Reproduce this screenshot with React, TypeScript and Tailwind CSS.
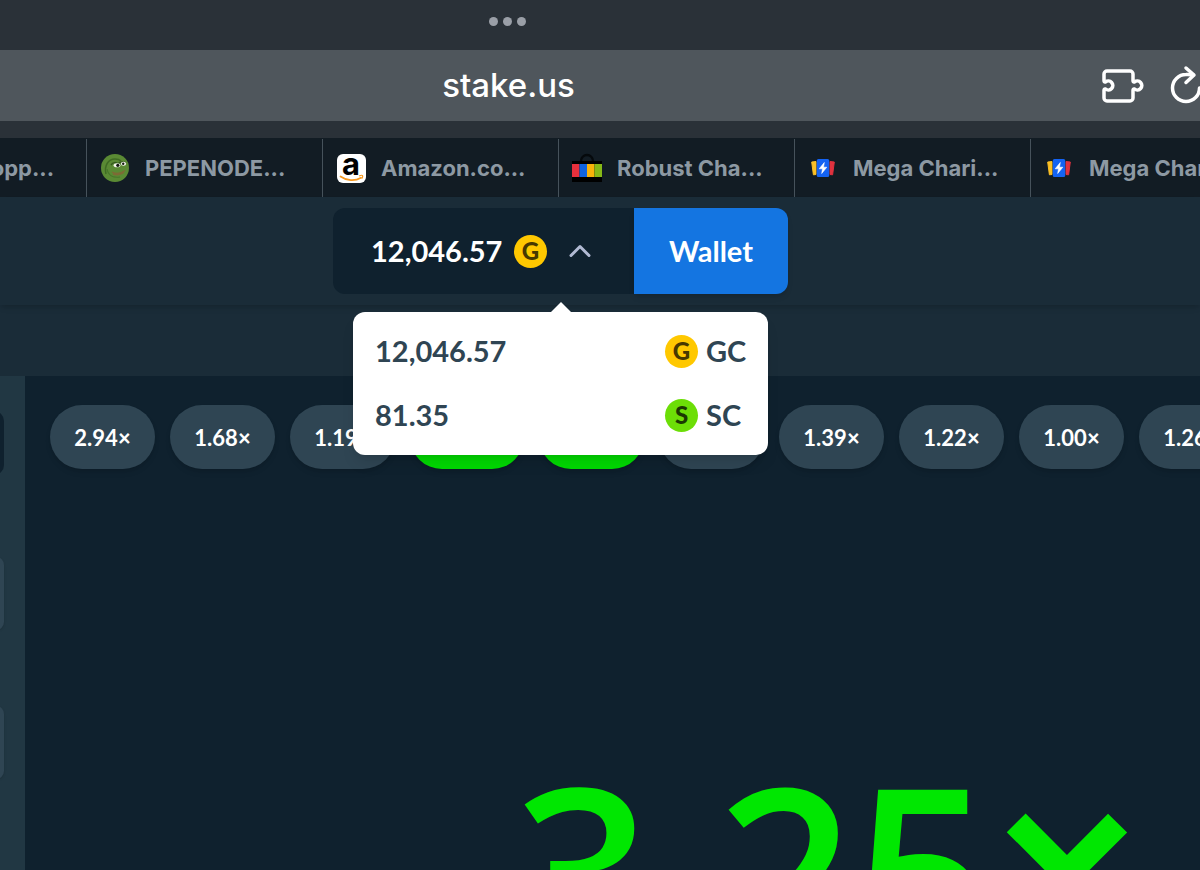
import React from 'react';
import { ChevronUp } from 'lucide-react';
import clsx from 'clsx';

const uiFont = "font-['Inter','Liberation_Sans',sans-serif]";
const siteFont = "font-['Lato','Liberation_Sans',sans-serif]";

type BookmarkIcon = 'pepe' | 'amazon' | 'bag' | 'cards';

const bookmarks: { id: number; label: string; icon: BookmarkIcon }[] = [
  { id: 1, label: 'PEPENODE...', icon: 'pepe' },
  { id: 2, label: 'Amazon.co...', icon: 'amazon' },
  { id: 3, label: 'Robust Cha...', icon: 'bag' },
  { id: 4, label: 'Mega Chari...', icon: 'cards' },
  { id: 5, label: 'Mega Chari...', icon: 'cards' },
];

const results: { id: number; value?: string; win?: boolean; wide?: boolean }[] = [
  { id: 1, value: '2.94' },
  { id: 2, value: '1.68' },
  { id: 3, value: '1.19' },
  { id: 4, win: true, wide: true },
  { id: 5, win: true },
  { id: 6 },
  { id: 7, value: '1.39' },
  { id: 8, value: '1.22' },
  { id: 9, value: '1.00' },
  { id: 10, value: '1.26' },
];

const balances: { amount: string; coin: 'G' | 'S'; code: string }[] = [
  { amount: '12,046.57', coin: 'G', code: 'GC' },
  { amount: '81.35', coin: 'S', code: 'SC' },
];

function PepeIcon() {
  return (
    <svg viewBox="0 0 28 28" className="w-7 h-7" aria-hidden="true">
      <circle cx="14" cy="14" r="14" fill="#5a8a34" />
      <path d="M5 20C3 12 7 5 14 5c3 0 5 1 6 2" fill="none" stroke="#3f6b24" strokeWidth="1.5" />
      <path d="M10 11c2-3 5-3 7-1 2-2.500 5-2.500 8-1" fill="none" stroke="#35591f" strokeWidth="1.5" />
      <ellipse cx="16" cy="11.300" rx="3.400" ry="2" fill="#f4f6ee" />
      <ellipse cx="22.500" cy="9.800" rx="2.600" ry="2" fill="#f4f6ee" />
      <circle cx="16.800" cy="11.300" r="1.600" fill="#141a10" />
      <circle cx="22.200" cy="9.800" r="1.200" fill="#141a10" />
      <path d="M11 18c4 2.500 9 1.500 13-1.500M12 20c4 1.500 8 .5 11-1.500" fill="none" stroke="#7d6a35" strokeWidth="1.4" />
      <path d="M6 15c1 6 6 9 13 8" fill="none" stroke="#47762a" strokeWidth="1.2" />
    </svg>
  );
}

function AmazonIcon() {
  return (
    <span className="relative block w-[29px] h-[29px] rounded-md bg-white overflow-hidden" aria-hidden="true">
      <span className="block text-center text-[31px] leading-5 font-bold text-black">a</span>
      <svg viewBox="0 0 29 29" className="absolute inset-0">
        <path d="M3.500 22.500c6 4.300 14.500 4.800 20.500 1.200" fill="none" stroke="#f7981d" strokeWidth="1.7" strokeLinecap="round" />
        <path d="M22 22c2-.8 3.300-.8 3.600-.3s0 1.800-.9 3" fill="none" stroke="#f7981d" strokeWidth="1.2" />
      </svg>
    </span>
  );
}

function BagIcon() {
  return (
    <svg viewBox="0 0 30 30" className="w-[30px] h-[30px]" aria-hidden="true">
      <path d="M9 9V8a6 6 0 0 1 12 0v1" fill="none" stroke="#05090c" strokeWidth="2.4" />
      <path d="M0 8h30v21H0z" fill="#000" />
      <path d="M0 11h7.500v13H0z" fill="#e8303c" />
      <path d="M7.500 11H15v13H7.500z" fill="#0f63e0" />
      <path d="M15 11h7.500v13H15z" fill="#f7b20a" />
      <path d="M22.500 11H30v13h-7.500z" fill="#86b817" />
    </svg>
  );
}

function CardsIcon() {
  return (
    <svg viewBox="0 0 24 18" className="w-6 h-[18px]" aria-hidden="true">
      <path d="M.7 3 5 2.500V15.500l-2.600.3z" fill="#fbbf24" stroke="#fbbf24" strokeLinejoin="round" />
      <path d="M23.300 3 19 2.500V15.500l2.600.3z" fill="#e0323f" stroke="#e0323f" strokeLinejoin="round" />
      <rect x="5.800" width="12.400" height="18" rx="1.500" fill="#1463f3" />
      <path d="M13.300 3.500 8.200 9.800h3.300L10.700 14.500l5.100-6.300h-3.300z" fill="#fff" stroke="#fff" strokeWidth=".6" />
    </svg>
  );
}

function SiteIcon({ icon }: { icon: BookmarkIcon }) {
  switch (icon) {
    case 'pepe':
      return <PepeIcon />;
    case 'amazon':
      return <AmazonIcon />;
    case 'bag':
      return <BagIcon />;
    default:
      return <CardsIcon />;
  }
}

function Coin({ kind }: { kind: 'G' | 'S' }) {
  return (
    <span
      className={clsx(
        'flex items-center justify-center shrink-0 w-[33px] h-[33px] rounded-full text-2xl leading-none font-black',
        kind === 'G' ? 'bg-[#ffc800] text-[#473800]' : 'bg-[#6cde07] text-[#1b3802]'
      )}
    >
      {kind}
    </span>
  );
}

function BrowserChrome() {
  return (
    <div className={clsx(uiFont, 'shrink-0 bg-[#2a3138]')}>
      {/* Multitasking dots */}
      <button aria-label="Window controls" className="flex items-center justify-center gap-[5px] w-full h-[50px] pr-[186px] pb-2">
        <span className="w-[9px] h-[9px] rounded-full bg-[#9a9fa7]" />
        <span className="w-[9px] h-[9px] rounded-full bg-[#9a9fa7]" />
        <span className="w-[9px] h-[9px] rounded-full bg-[#9a9fa7]" />
      </button>

      {/* Address bar */}
      <div className="flex items-center h-[71px] bg-[#4f565c] overflow-hidden">
        <input
          type="text"
          aria-label="Address"
          defaultValue="stake.us"
          className="flex-1 min-w-0 pr-[84px] bg-transparent text-center text-[33px] font-medium text-white outline-none"
        />
        <button aria-label="Extensions" className="shrink-0 mr-6">
          <svg viewBox="0 0 44 36" className="w-11 h-9" fill="none" stroke="#fff" strokeWidth="3.500" strokeLinecap="round" strokeLinejoin="round">
            <path d="M3 12.500V6a3 3 0 0 1 3-3h23a3 3 0 0 1 3 3v6.500q0 2 1.500 1.500a4.500 4.500 0 1 1 0 7q-1.500-.5-1.500 1.500V30a3 3 0 0 1-3 3H6a3 3 0 0 1-3-3v-7.500q0-2 1.500-1.500a4.500 4.500 0 1 0 0-7q-1.500.5-1.500-1.500z" />
          </svg>
        </button>
        <button aria-label="Reload" className="shrink-0 -mr-1">
          <svg viewBox="0 0 35 42" className="w-[35px] h-[42px]" fill="none" stroke="#fff" strokeWidth="3.500" strokeLinecap="round" strokeLinejoin="round">
            <path d="M24 10q-3.500-.8-7-.5a13.500 13.500 0 1 0 13.500 13.500" />
            <path d="m17 3 8 7-8 7.500" />
          </svg>
        </button>
      </div>

      {/* Bookmarks */}
      <nav aria-label="Bookmarks" className="flex mt-[17px] h-[59px] pt-px bg-[#121c24] text-[22px] font-bold text-[#8d99a3] overflow-hidden">
        <a href="#" className="flex items-center justify-end shrink-0 w-[86px] pr-8 whitespace-nowrap">
          Shopp...
        </a>
        {bookmarks.map((item) => (
          <a
            key={item.id}
            href="#"
            className="flex items-center gap-[14px] shrink-0 w-[236px] pl-3 border-l border-[#46525b] whitespace-nowrap"
          >
            <span className="flex items-center justify-center w-8">
              <SiteIcon icon={item.icon} />
            </span>
            {item.label}
          </a>
        ))}
      </nav>
    </div>
  );
}

function BalanceMenu() {
  return (
    <div className="absolute left-5 right-5 top-full mt-[18px] pt-[7px] pb-2 rounded-xl bg-white text-[#2f4553] shadow-lg">
      <svg viewBox="0 0 20 10" className="absolute bottom-full left-1/2 -translate-x-1/2 w-5 h-[10px]" aria-hidden="true">
        <path d="M0 10 10 0l10 10z" fill="#fff" />
      </svg>
      {balances.map((item) => (
        <button key={item.code} className="flex items-center w-full h-16 pl-[22px] pr-5">
          <span>{item.amount}</span>
          <span className="flex items-center gap-2 ml-auto">
            <Coin kind={item.coin} />
            <span className="w-[42px] text-left">{item.code}</span>
          </span>
        </button>
      ))}
    </div>
  );
}

function Header() {
  return (
    <header className="relative z-10 flex justify-center shrink-0 h-[108px] pt-[11px] pr-[79px] bg-[#1a2c38] shadow-md">
      <div className="relative flex h-[86px] text-[29px] font-bold">
        <button
          aria-expanded="true"
          className="flex items-center w-[301px] pl-[38px] pr-9 rounded-l-xl bg-[#0f212e] text-white"
        >
          <span>12,046.57</span>
          <span className="flex items-center gap-[15px] ml-auto">
            <Coin kind="G" />
            <ChevronUp className="w-9 h-9 text-[#b1bad3]" />
          </span>
        </button>
        <button className="w-[154px] rounded-r-xl bg-[#1475e1] text-white shadow-md">Wallet</button>
        <BalanceMenu />
      </div>
    </header>
  );
}

function BetPanel() {
  return (
    <aside className="shrink-0 w-[25px] bg-[#213743] overflow-hidden">
      <div className="-ml-4 mt-[35px] w-5 h-16 rounded-full bg-[#0f212e]" />
      <div className="-ml-4 mt-[82px] w-5 h-[73px] rounded-lg bg-[#2f4553] shadow" />
      <div className="-ml-4 mt-[76px] w-5 h-[73px] rounded-lg bg-[#2f4553] shadow" />
    </aside>
  );
}

function Game() {
  return (
    <main className="flex-1 min-w-0 pl-[25px] pt-[29px] bg-[#0f212e] overflow-hidden">
      <div className="flex gap-[15px]">
        {results.map((item) => (
          <button
            key={item.id}
            aria-label={item.value ? undefined : 'Result'}
            className={clsx(
              'flex items-center justify-center shrink-0 h-16 rounded-full text-[22px] font-bold text-white shadow-md',
              item.wide ? 'w-[114px]' : 'w-[105px]',
              item.win ? 'bg-[#00d802]' : 'bg-[#2f4553]'
            )}
          >
            {item.value && (
              <>
                {item.value}
                <span className="font-black">×</span>
              </>
            )}
          </button>
        ))}
      </div>
      <p className="mt-[279px] pl-[464px] whitespace-nowrap font-['Open_Sans','Liberation_Sans',sans-serif] text-[240px] leading-none font-semibold text-[#00e701]">
        3.25<span className="font-['Lato','Liberation_Sans',sans-serif] text-[260px] leading-[200px] font-black">×</span>
      </p>
    </main>
  );
}

export default function App() {
  return (
    <div className="flex flex-col h-screen overflow-hidden bg-[#1a2c38]">
      <BrowserChrome />
      <div className={clsx(siteFont, 'flex flex-col flex-1 min-h-0')}>
        <Header />
        <div className="flex flex-1 min-h-0 mt-[71px]">
          <BetPanel />
          <Game />
        </div>
      </div>
    </div>
  );
}
